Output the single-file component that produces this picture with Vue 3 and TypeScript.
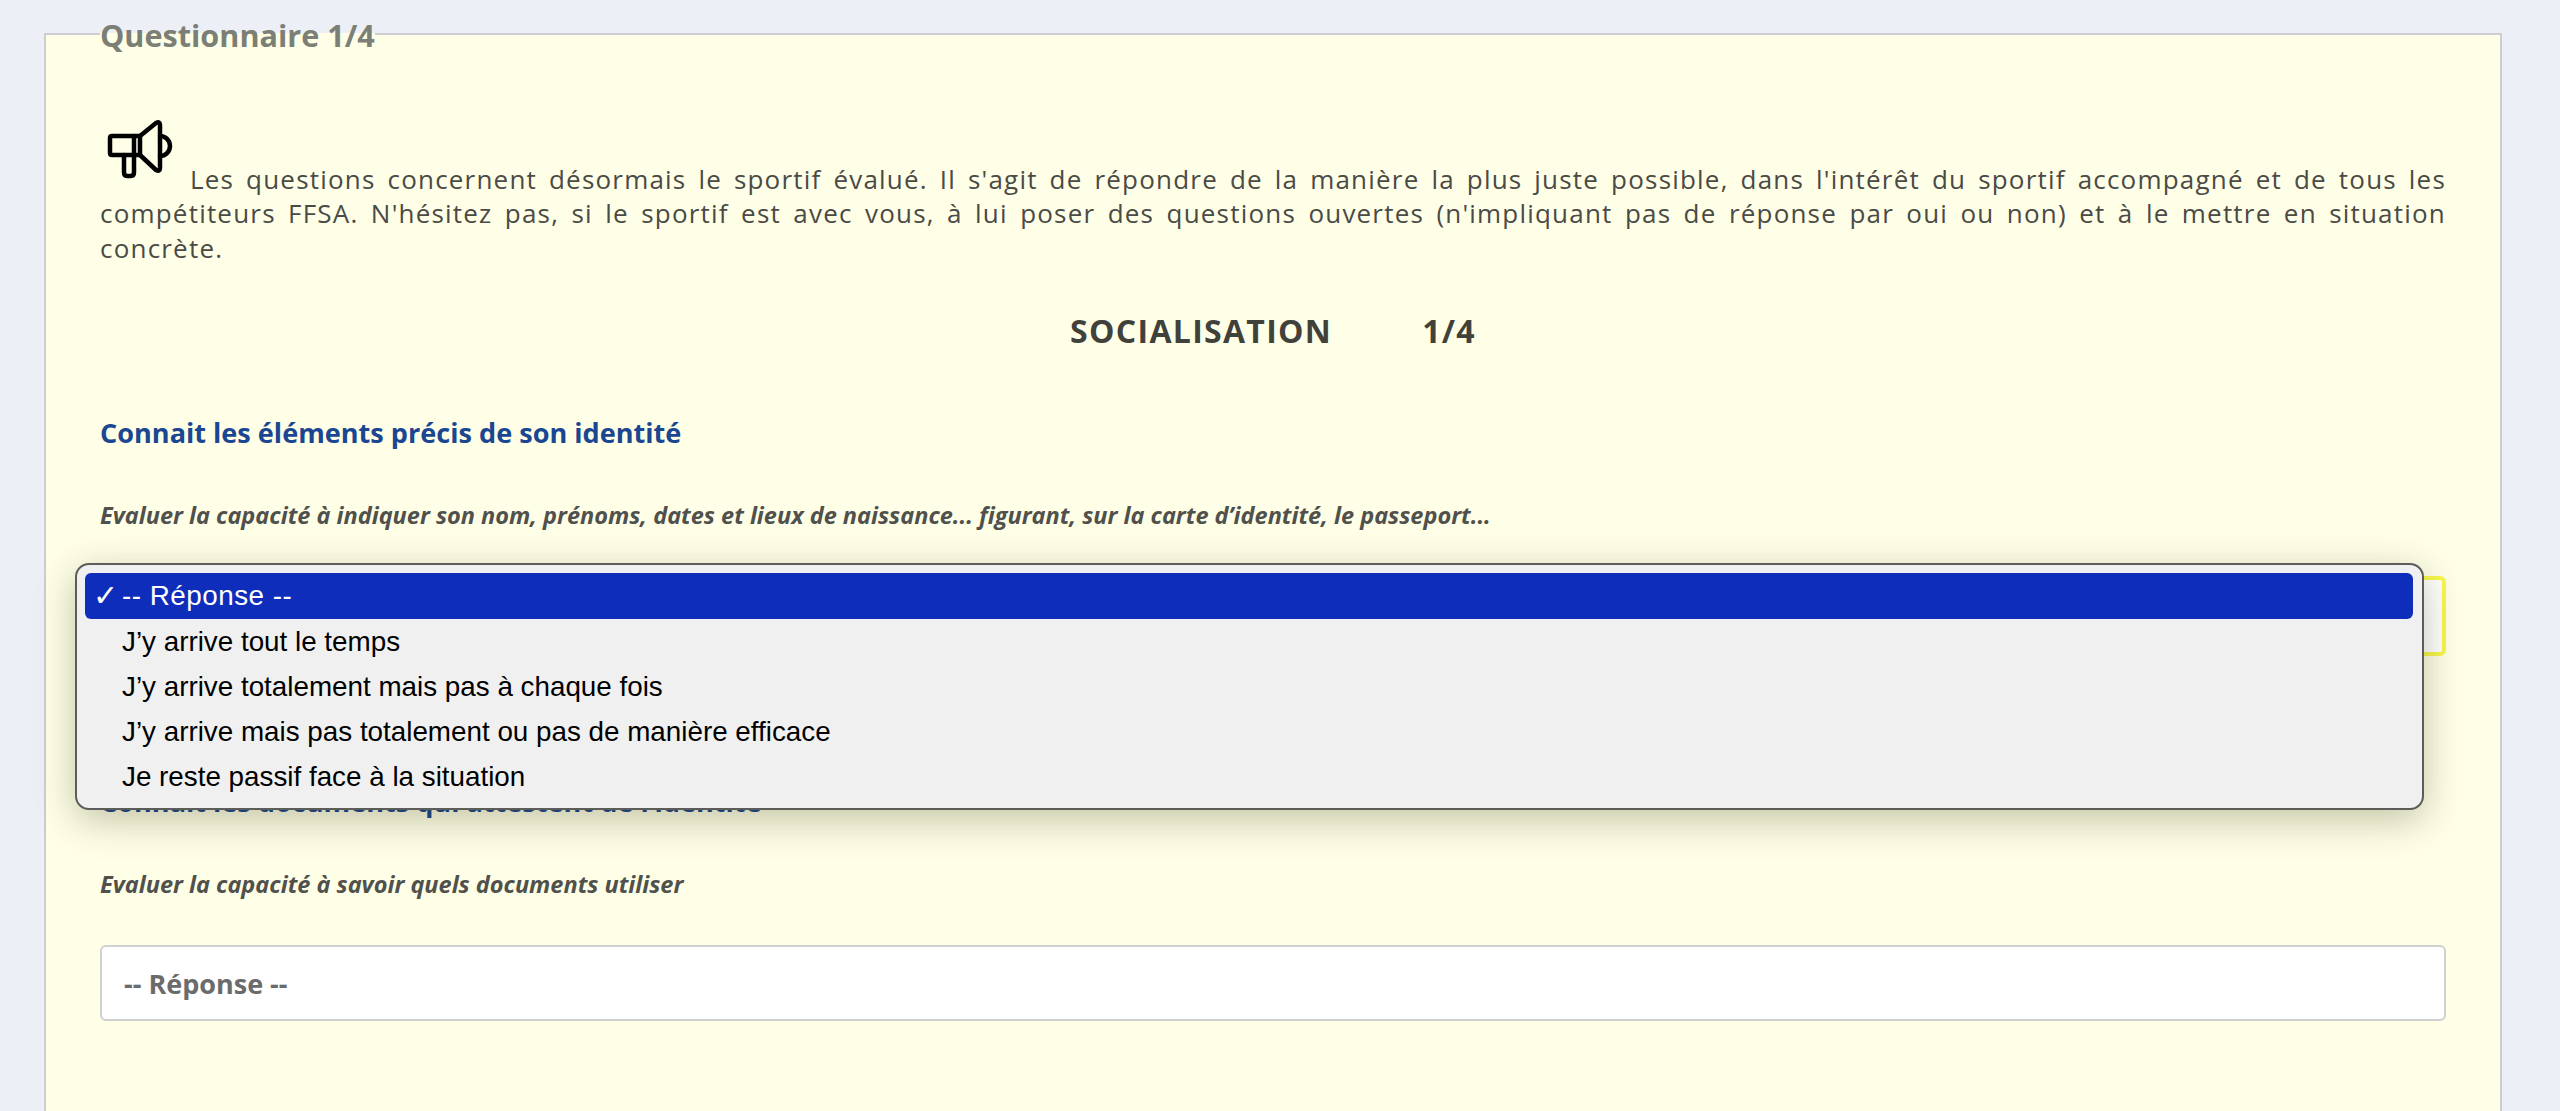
<template>
  <div class="page">
    <fieldset class="panel">
      <legend class="panel-title">Questionnaire 1/4</legend>

      <p class="intro">
        <svg class="intro-icon" viewBox="0 0 76 70" fill="none" stroke="#000" stroke-width="4.5" stroke-linecap="round" stroke-linejoin="round">
          <path d="M12 17H40V36H12Q10 36 10 34V19Q10 17 12 17Z" />
          <path d="M34 17V36" />
          <path d="M40 17L56 4Q60 2 60 6V49Q60 53 56 51L40 36" />
          <path d="M24 36V53Q24 57 27 57H31Q34 57 34 53V36" />
          <path d="M60 17A10 10 0 0 1 60 37" />
        </svg>
        Les questions concernent désormais le sportif évalué. Il s'agit de répondre de la manière la plus juste possible, dans l'intérêt du sportif accompagné et de tous les compétiteurs FFSA. N'hésitez pas, si le sportif est avec vous, à lui poser des questions ouvertes (n'impliquant pas de réponse par oui ou non) et à le mettre en situation concrète.
      </p>

      <h2 class="section-title">
        <span>SOCIALISATION</span>
        <span>1/4</span>
      </h2>

      <section v-for="(q, i) in questions" :key="q.title" class="question">
        <h3 class="question-title">{{ q.title }}</h3>
        <p class="question-hint">{{ q.hint }}</p>
        <div class="select-wrap">
          <select class="answer" :class="{ focused: i === 0 }">
            <option>{{ placeholder }}</option>
          </select>
          <ul v-if="i === 0" class="popup">
            <li class="popup-item selected">
              <span class="check">✓</span>{{ placeholder }}
            </li>
            <li v-for="opt in options" :key="opt" class="popup-item">{{ opt }}</li>
          </ul>
        </div>
      </section>
    </fieldset>
  </div>
</template>

<script setup lang="ts">
const placeholder = '-- Réponse --'

const options: string[] = [
  'J’y arrive tout le temps',
  'J’y arrive totalement mais pas à chaque fois',
  'J’y arrive mais pas totalement ou pas de manière efficace',
  'Je reste passif face à la situation',
]

const questions = [
  {
    title: 'Connait les éléments précis de son identité',
    hint: 'Evaluer la capacité à indiquer son nom, prénoms, dates et lieux de naissance... figurant, sur la carte d’identité, le passeport...',
  },
  {
    title: 'Connait les documents qui attestent de l’identité',
    hint: 'Evaluer la capacité à savoir quels documents utiliser',
  },
]
</script>

<style scoped>
.page {
  height: 1111px;
  overflow: hidden;
  padding: 0 58px 0 44px;
  background: #ecf0f6;
  font-family: "Open Sans", sans-serif;
  box-sizing: border-box;
}

.panel {
  margin: 14px 0 0;
  padding: 0 54px;
  min-height: 1200px;
  min-inline-size: 0;
  border: 2px solid #cbcdd0;
  background: #feffe6;
  box-sizing: border-box;
}

.panel-title {
  padding: 2px 0 0;
  font-size: 30.6px;
  font-weight: 700;
  line-height: 38px;
  color: #7c7f76;
}

.intro {
  margin: 65px 0 0;
  font-size: 26px;
  line-height: 34.4px;
  letter-spacing: 1.2px;
  text-align: justify;
  color: #4a4a46;
}

.intro-icon {
  display: inline-block;
  width: 76px;
  height: 70px;
  margin-right: 2px;
}

.section-title {
  display: flex;
  justify-content: center;
  gap: 90px;
  margin: 45px 0 0;
  font-size: 32px;
  font-weight: 700;
  line-height: 42px;
  letter-spacing: 1.3px;
  color: #41413b;
}

.question {
  padding-bottom: 65px;
}

.question-title {
  margin: 63px 0 0;
  font-size: 27.1px;
  font-weight: 700;
  line-height: 36px;
  color: #1a4692;
}

.question-hint {
  margin: 49px 0 0;
  font-size: 23.5px;
  font-weight: 700;
  font-style: italic;
  line-height: 30px;
  color: #50504c;
}

.select-wrap {
  position: relative;
  margin-top: 46px;
}

.answer {
  display: block;
  width: 100%;
  height: 76px;
  padding: 0 22px;
  appearance: none;
  border: 2px solid #cfd0d0;
  border-radius: 6px;
  background: #fff;
  font-family: inherit;
  font-size: 27px;
  font-weight: 700;
  color: #6b6b6b;
  outline: none;
  box-sizing: border-box;
}

.answer.focused {
  height: 80px;
  border: 4px solid #f7f74c;
}

.popup {
  position: absolute;
  top: -13px;
  left: -25px;
  right: 22px;
  margin: 0;
  padding: 8px 9px 9px 8px;
  list-style: none;
  border: 2px solid #5c5c58;
  border-radius: 14px;
  background: #f0f0f0;
  box-shadow: 0 10px 38px rgba(40, 40, 0, 0.28);
  font-family: "Liberation Sans", Arial, sans-serif;
  font-size: 27.8px;
  color: #000;
  box-sizing: border-box;
}

.popup-item {
  position: relative;
  height: 45px;
  padding-left: 37px;
  line-height: 45px;
  border-radius: 6px;
}

.popup-item.selected {
  height: 46px;
  background: #0e2dbb;
  color: #fff;
  letter-spacing: 0.5px;
}

.check {
  position: absolute;
  left: 8px;
  font-size: 30px;
}
</style>

<style>
html,
body {
  margin: 0;
  background: #ecf0f6;
}
</style>
